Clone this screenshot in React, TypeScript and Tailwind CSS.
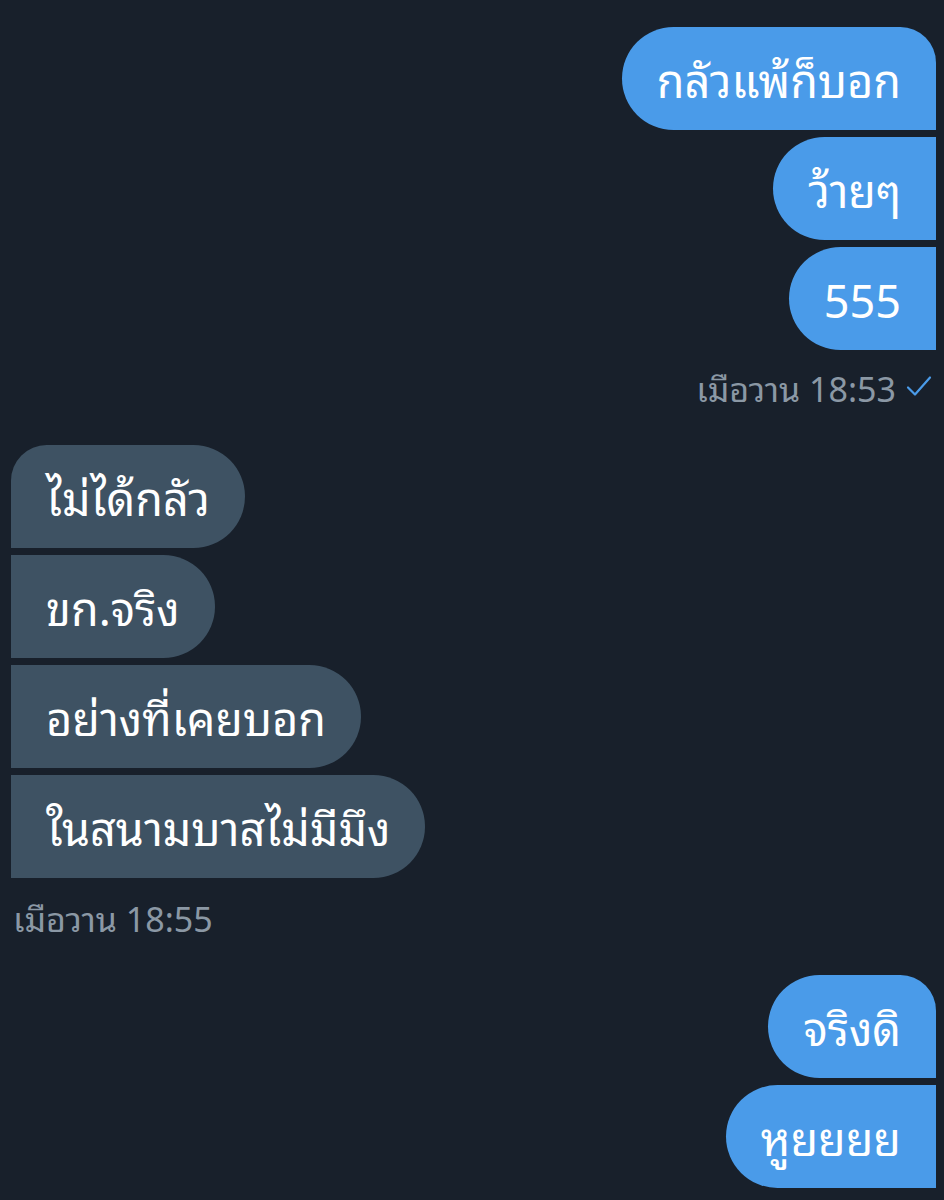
const font = {
  fontFamily:
    '"Noto Sans Thai Looped", "Noto Serif Thai", Loma, Garuda, Sawasdee, "Tlwg Typo", "Noto Sans Thai", "Noto Sans", sans-serif',
}

type Pos = 'first' | 'middle' | 'last'

function Sent({ text, pos }: { text: string; pos: Pos }) {
  const corner = pos === 'first' ? 'rounded-l-[52px] rounded-tr-[36px]' : 'rounded-l-[52px]'
  return (
    <div className={`h-[103px] flex items-center px-[35px] bg-[#4a9be9] text-white text-[45px] leading-none ${corner}`}>
      {text}
    </div>
  )
}

function Received({ text, pos }: { text: string; pos: Pos }) {
  const corner = pos === 'first' ? 'rounded-r-[52px] rounded-tl-[36px]' : 'rounded-r-[52px]'
  return (
    <div className={`h-[103px] flex items-center px-[35px] bg-[#3e5263] text-white text-[45px] leading-none ${corner}`}>
      {text}
    </div>
  )
}

export default function App() {
  return (
    <div className="w-[944px] h-[1200px] overflow-hidden bg-[#18202b] pt-[27px] pl-[11px] pr-[8px]" style={font}>
      <div className="flex flex-col items-end gap-[7px]">
        <Sent text="กลัวแพ้ก็บอก" pos="first" />
        <Sent text="ว้ายๆ" pos="middle" />
        <Sent text="555" pos="last" />
      </div>
      <div className="mt-[18px] h-[36px] flex items-center justify-end gap-[10px] pr-[4px] text-[34px] text-[#8b98a5]">
        <span>เมือวาน 18:53</span>
        <svg width="26" height="22" viewBox="0 0 26 22" fill="none">
          <path d="M2 12.5 L9 19.5 L24 2.5" stroke="#4a9be9" strokeWidth="2.2" strokeLinecap="round" strokeLinejoin="round" />
        </svg>
      </div>

      <div className="mt-[41px] flex flex-col items-start gap-[7px]">
        <Received text="ไม่ได้กลัว" pos="first" />
        <Received text="ขก.จริง" pos="middle" />
        <Received text="อย่างที่เคยบอก" pos="middle" />
        <Received text="ในสนามบาสไม่มีมึง" pos="last" />
      </div>
      <div className="mt-[20px] h-[36px] flex items-center pl-[2px] text-[34px] text-[#8b98a5]">
        เมือวาน 18:55
      </div>

      <div className="mt-[41px] flex flex-col items-end gap-[7px]">
        <Sent text="จริงดิ" pos="first" />
        <Sent text="หูยยยย" pos="middle" />
      </div>
    </div>
  )
}
